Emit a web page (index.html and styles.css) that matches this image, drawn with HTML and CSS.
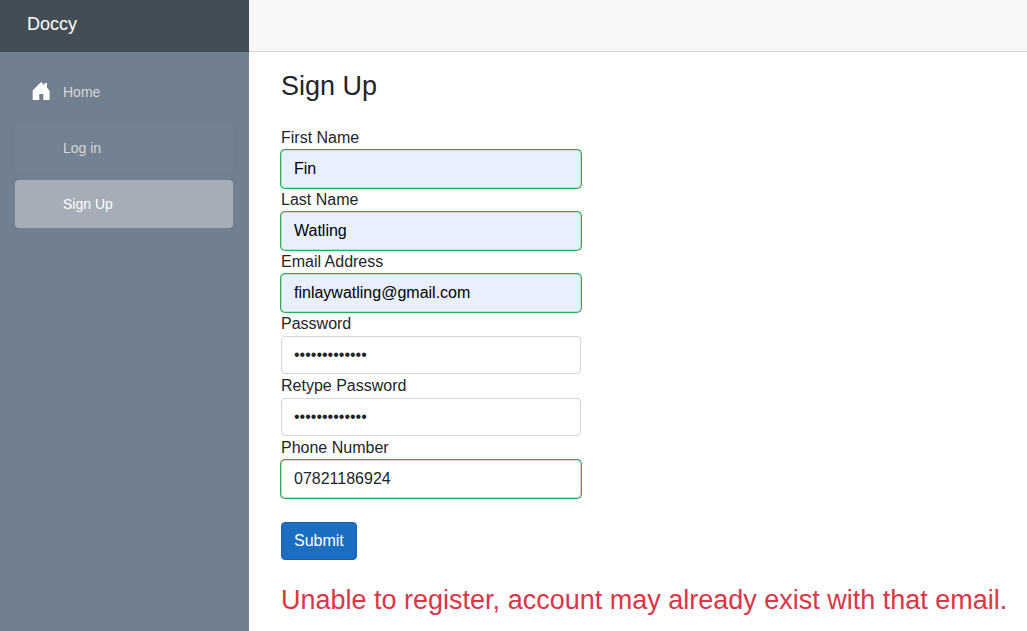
FILE: index.html
```html
<!DOCTYPE html>
<html lang="en">
<head>
<meta charset="utf-8">
<meta name="viewport" content="width=device-width, initial-scale=1">
<title>Doccy</title>
<link rel="stylesheet" href="styles.css">
</head>
<body>
<div class="page">
  <div class="sidebar">
    <header class="brand-bar"><a class="brand" href="#">Doccy</a></header>
    <nav class="nav">
      <a class="nav-link" href="#"><svg class="nav-icon" viewBox="0 0 20 20" aria-hidden="true"><path d="M10 0 L13.5 3.3 V1 H16 V5.5 L18.6 9 V18 H12.3 V12 H8.3 V18 H1.7 V8.6 Z" fill="#fff"/></svg>Home</a>
      <a class="nav-link nav-link-hover" href="#"><span class="nav-icon"></span>Log in</a>
      <a class="nav-link nav-link-active" href="#"><span class="nav-icon"></span>Sign Up</a>
    </nav>
  </div>
  <main class="main">
    <div class="top-row"></div>
    <section class="content">
      <h1 class="title">Sign Up</h1>
      <form class="form">
        <label class="label" for="first">First Name</label>
        <input class="input valid filled" id="first" type="text" value="Fin">
        <label class="label" for="last">Last Name</label>
        <input class="input valid filled" id="last" type="text" value="Watling">
        <label class="label" for="email">Email Address</label>
        <input class="input valid filled" id="email" type="email" value="finlaywatling@gmail.com">
        <label class="label" for="password">Password</label>
        <input class="input" id="password" type="password" value="passwordpassw">
        <label class="label" for="retype">Retype Password</label>
        <input class="input" id="retype" type="password" value="passwordpassw">
        <label class="label" for="phone">Phone Number</label>
        <input class="input valid" id="phone" type="tel" value="07821186924">
        <button class="submit" type="button">Submit</button>
      </form>
      <p class="error" role="alert">Unable to register, account may already exist with that email.</p>
    </section>
  </main>
</div>
</body>
</html>
```
FILE: styles.css
```css
* { box-sizing: border-box; }
body {
  margin: 0;
  font: 16px/24px "Liberation Sans", Arial, sans-serif;
  color: #212529;
  background: #fff;
}
.page { display: flex; min-height: 100vh; }
.sidebar { flex: 0 0 249px; background: #708090; }
.brand-bar {
  display: flex;
  align-items: center;
  height: 52px;
  padding: 0 27px 4px;
  background: #434d56;
}
.brand { font-size: 18px; color: #fff; text-decoration: none; }
.nav { display: flex; flex-direction: column; gap: 8px; padding: 16px 16px 16px 15px; }
.nav-link {
  display: flex;
  align-items: center;
  height: 48px;
  padding: 0 16px;
  border-radius: 4px;
  font-size: 14px;
  color: #d7d7d7;
  text-decoration: none;
}
.nav-link-hover { background: #738292; }
.nav-link-active { background: #a5aeb8; color: #fff; }
.nav-icon { width: 20px; height: 20px; margin-right: 12px; }
.main { flex: 1; min-width: 0; }
.top-row { height: 52px; background: #f7f7f7; border-bottom: 1px solid #d6d5d5; }
.content { padding: 16px 0 0 32px; }
.title { margin: 0 0 22px; font-size: 27px; line-height: 36px; font-weight: 400; }
.form { display: flex; flex-direction: column; align-items: flex-start; }
.label { line-height: 24px; }
.input {
  width: 300px;
  max-width: 100%;
  height: 38px;
  padding: 6px 12px;
  border: 1px solid #ced4da;
  border-radius: 4px;
  outline: none;
  font: inherit;
  color: #212529;
  background: #fff;
}
.valid { box-shadow: 0 0 0 1px #26b050; }
.filled { background: #e8f0fe; color: #000; }
.submit {
  height: 38px;
  margin-top: 24px;
  padding: 6px 12px;
  border: 1px solid #1861ac;
  border-radius: 4px;
  font: inherit;
  color: #fff;
  background: #1b6ec2;
}
.error { margin: 22px 0 0; font-size: 27px; line-height: 36px; color: #dc3545; }
```
